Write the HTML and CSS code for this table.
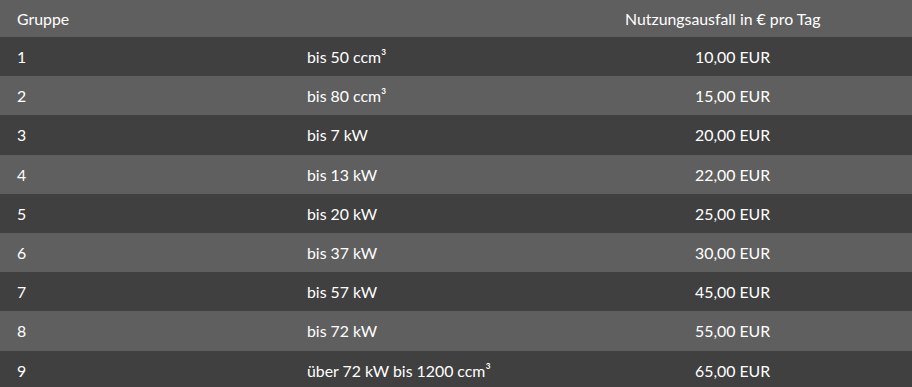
FILE: index.html
```html
<!DOCTYPE html>
<html lang="de">
<head>
<meta charset="utf-8">
<title>Nutzungsausfall</title>
<link rel="stylesheet" href="styles.css">
</head>
<body>
<table class="nu-table">
  <thead>
    <tr class="row-light head">
      <th class="c1">Gruppe</th>
      <th class="c2"></th>
      <th class="c3">Nutzungsausfall in € pro Tag</th>
    </tr>
  </thead>
  <tbody>
    <tr class="row-dark"><td class="c1">1</td><td class="c2">bis 50 ccm³</td><td class="c3 val">10,00 EUR</td></tr>
    <tr class="row-light"><td class="c1">2</td><td class="c2">bis 80 ccm³</td><td class="c3 val">15,00 EUR</td></tr>
    <tr class="row-dark"><td class="c1">3</td><td class="c2">bis 7 kW</td><td class="c3 val">20,00 EUR</td></tr>
    <tr class="row-light"><td class="c1">4</td><td class="c2">bis 13 kW</td><td class="c3 val">22,00 EUR</td></tr>
    <tr class="row-dark"><td class="c1">5</td><td class="c2">bis 20 kW</td><td class="c3 val">25,00 EUR</td></tr>
    <tr class="row-light"><td class="c1">6</td><td class="c2">bis 37 kW</td><td class="c3 val">30,00 EUR</td></tr>
    <tr class="row-dark"><td class="c1">7</td><td class="c2">bis 57 kW</td><td class="c3 val">45,00 EUR</td></tr>
    <tr class="row-light"><td class="c1">8</td><td class="c2">bis 72 kW</td><td class="c3 val">55,00 EUR</td></tr>
    <tr class="row-dark"><td class="c1">9</td><td class="c2">über 72 kW bis 1200 ccm³</td><td class="c3 val">65,00 EUR</td></tr>
  </tbody>
</table>
</body>
</html>
```
FILE: styles.css
```css
html, body {
  margin: 0;
  padding: 0;
  background: #404040;
}
.nu-table {
  width: 912px;
  border-collapse: collapse;
  table-layout: fixed;
  font-family: Lato, "Open Sans", sans-serif;
  font-size: 15.85px;
  color: #ffffff;
}
.nu-table th,
.nu-table td {
  text-align: left;
  font-weight: normal;
  line-height: 25.2px;
  padding: 7px 0;
  white-space: nowrap;
  vertical-align: middle;
}
.nu-table .head th {
  padding: 6px 0 5.8px;
}
.row-light { background: #5f5f5f; }
.row-dark { background: #404040; }
.c1 { width: 273px; padding-left: 17px !important; }
.c2 { width: 301px; padding-left: 17px !important; }
.c3 { width: 287px; padding-left: 17px !important; }
.nu-table td.val { padding-left: 87px !important; }
```
